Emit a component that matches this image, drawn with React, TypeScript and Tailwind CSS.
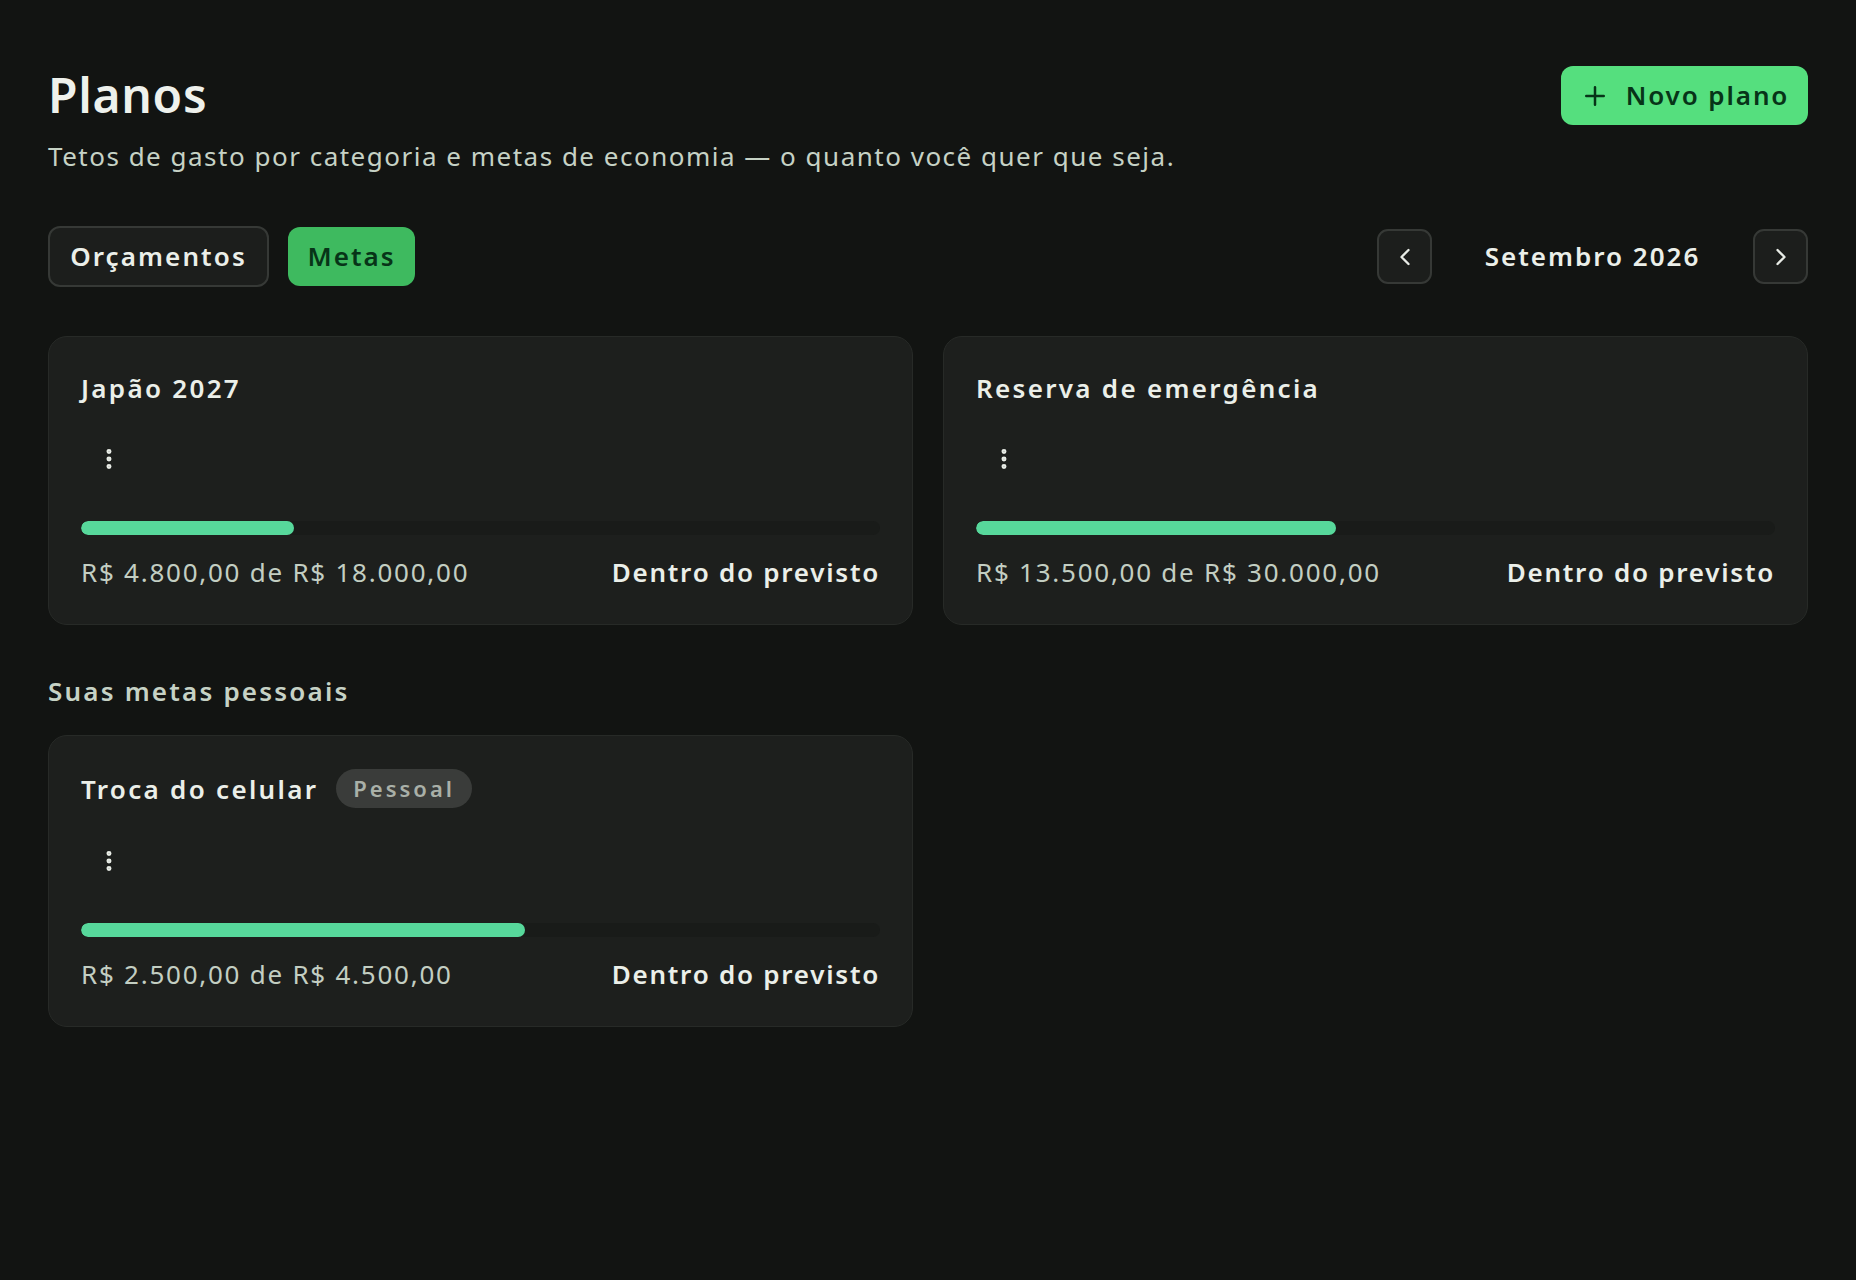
import React from "react";

const font = { fontFamily: '"Noto Sans", "Open Sans", sans-serif' };

function Dots() {
  return (
    <svg width="26" height="26" viewBox="0 0 24 24" fill="none" stroke="#e8ece6" strokeWidth="2.6" strokeLinecap="round">
      <circle cx="12" cy="5" r="1" />
      <circle cx="12" cy="12" r="1" />
      <circle cx="12" cy="19" r="1" />
    </svg>
  );
}

function Chevron({ dir }: { dir: "l" | "r" }) {
  return (
    <svg width="28" height="28" viewBox="0 0 24 24" fill="none" stroke="#e8ece6" strokeWidth="2" strokeLinecap="round" strokeLinejoin="round">
      {dir === "l" ? <path d="M15 18l-6-6 6-6" /> : <path d="M9 18l6-6-6-6" />}
    </svg>
  );
}

function GoalCard({ title, badge, pct, current, target }: { title: string; badge?: string; pct: number; current: string; target: string }) {
  return (
    <div className="rounded-[19px] border border-[#272a27] bg-[#1d1f1d] px-[32px] pt-[33px] pb-[34px]">
      <div className="flex items-center gap-[18px]">
        <span className="text-[26px] leading-[36px] font-semibold text-[#ebefe9] tracking-[2.3px]">{title}</span>
        {badge && (
          <span className="rounded-full bg-[#3a3c3a] px-[17px] h-[39px] flex items-center text-[22px] font-semibold tracking-[3px] text-[#a9b0a8]">
            {badge}
          </span>
        )}
      </div>
      <div className="mt-[25px] w-[56px] h-[56px] flex items-center justify-center">
        <Dots />
      </div>
      <div className="mt-[34px] h-[14px] rounded-full bg-[#191b19] overflow-hidden">
        <div className="h-full rounded-full bg-[#57d89b]" style={{ width: `${pct}%` }} />
      </div>
      <div className="mt-[19px] flex items-center justify-between text-[26px] leading-[36px]">
        <span className="text-[#c3cec2] tracking-[1.75px]">
          {current} de {target}
        </span>
        <span className="font-semibold text-[#ebefe9] tracking-[1.75px]">Dentro do previsto</span>
      </div>
    </div>
  );
}

export default function App() {
  return (
    <div className="min-h-screen w-full bg-[#121412] px-[48px] pt-[66px] pb-[60px]" style={font}>
      <div className="flex items-start justify-between">
        <h1 className="text-[48px] leading-[58px] font-semibold text-[#eef1ec] tracking-[0.7px]">Planos</h1>
        <button className="h-[59px] w-[247px] rounded-[12px] bg-[#55df7e] flex items-center justify-center gap-[16px] text-[26px] font-semibold text-[#073418] tracking-[1.9px]">
          <svg width="30" height="30" viewBox="0 0 24 24" fill="none" stroke="#073418" strokeWidth="2" strokeLinecap="round">
            <path d="M12 5v14M5 12h14" />
          </svg>
          Novo plano
        </button>
      </div>
      <p className="mt-[13px] text-[26px] leading-[36px] text-[#c6d2c5] tracking-[1.5px]">
        Tetos de gasto por categoria e metas de economia — o quanto você quer que seja.
      </p>

      <div className="mt-[52px] flex items-center justify-between">
        <div className="flex items-center gap-[19px]">
          <button className="h-[61px] w-[221px] rounded-[12px] border-2 border-[#363936] bg-[#1c1e1c] text-[26px] font-semibold text-[#ebefe9] tracking-[2.1px]">
            Orçamentos
          </button>
          <button className="h-[59px] w-[127px] rounded-[12px] bg-[#3eba5f] text-[26px] font-semibold text-[#073418] tracking-[2px]">
            Metas
          </button>
        </div>
        <div className="flex items-center">
          <button className="h-[55px] w-[55px] rounded-[11px] border-2 border-[#363936] bg-[#1c1e1c] flex items-center justify-center">
            <Chevron dir="l" />
          </button>
          <span className="w-[321px] text-center text-[26px] font-semibold text-[#ebefe9] tracking-[2px]">Setembro 2026</span>
          <button className="h-[55px] w-[55px] rounded-[11px] border-2 border-[#363936] bg-[#1c1e1c] flex items-center justify-center">
            <Chevron dir="r" />
          </button>
        </div>
      </div>

      <div className="mt-[49px] grid grid-cols-2 gap-[30px]">
        <GoalCard title="Japão 2027" pct={26.67} current="R$ 4.800,00" target="R$ 18.000,00" />
        <GoalCard title="Reserva de emergência" pct={45} current="R$ 13.500,00" target="R$ 30.000,00" />
      </div>

      <h2 className="mt-[48px] text-[26px] leading-[36px] font-semibold text-[#c6d2c5] tracking-[2.2px]">Suas metas pessoais</h2>

      <div className="mt-[26px] grid grid-cols-2 gap-[30px]">
        <GoalCard title="Troca do celular" badge="Pessoal" pct={55.56} current="R$ 2.500,00" target="R$ 4.500,00" />
      </div>
    </div>
  );
}
